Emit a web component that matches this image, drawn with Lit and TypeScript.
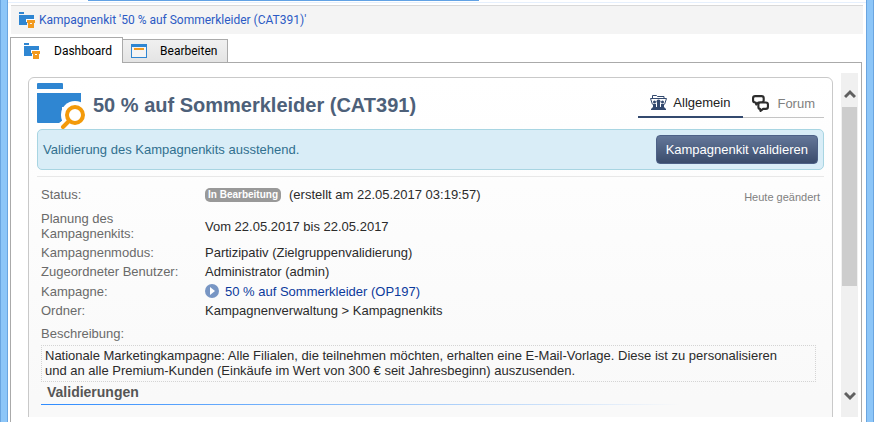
import { LitElement, html, css } from "lit";
import { customElement } from "lit/decorators.js";

const kitIcon = html`<svg class="i16" viewBox="0 0 16 16" aria-hidden="true">
  <path fill="#2f86d2" d="M0 0h5v2H0zM0 3h15v5H8v5H0z" />
  <path fill="#fff" d="M7 7h9v3H7z" />
  <path fill="#f29a1f" d="M8 8h8v3H8zM9 12h6v4H9z" />
  <path fill="#f29a1f" d="M9 11h2v1H9zM13 11h2v1h-2z" />
</svg>`;

const formIcon = html`<svg class="i16" viewBox="0 0 16 14" aria-hidden="true">
  <path fill="#2f86d2" d="M0 0h16v14H0z" />
  <path fill="#f4f4f4" d="M1 3h14v10H1z" />
  <path fill="#f29a1f" d="M3 4h10v2H3z" />
</svg>`;

const bigIcon = html`<svg class="big" viewBox="0 0 48 46" aria-hidden="true">
  <path fill="#2f86d2" d="M1 0h24q1 0 1 1v5H0V1q0-1 1-1zM0 10h44v14H25v14l-3 2H1q-1 0-1-1z" />
  <path fill="none" stroke="#fff" stroke-width="10" d="M33 37l-6 6" />
  <circle cx="38" cy="32" r="14" fill="#fff" />
  <path fill="none" stroke="#f39a0a" stroke-width="4" stroke-linecap="round" d="M32 38l-6 6" />
  <circle cx="38" cy="32" r="8" fill="#fff" stroke="#f39a0a" stroke-width="4" />
</svg>`;

const generalIcon = html`<svg class="tabicon" viewBox="0 0 17 17" aria-hidden="true">
  <path fill="none" stroke="#33496e" d="M2.500 4V1.500h4l1 1h6.500V4" />
  <path fill="none" stroke="#33496e" d="M2.500 10.500L.5 4.500h16L14.500 10.500" />
  <g fill="#33496e">
    <circle cx="4.500" cy="8" r="1.500" />
    <circle cx="12.500" cy="8" r="1.500" />
    <path d="M3 10h3v3H3zM11 10h3v3h-3z" />
    <circle cx="8.500" cy="7.500" r="2" />
    <path d="M7 9h3v5H7z" />
    <path d="M1 15l2-2h11l2 2v1H1z" />
  </g>
</svg>`;

const forumIcon = html`<svg class="tabicon" viewBox="0 0 16 16" aria-hidden="true">
  <g fill="#fff" stroke="#2d2d2d" stroke-width="2" stroke-linejoin="round">
    <path d="M3 1h6q2 0 2 2v2q0 2-2 2H6L4 9 3.500 7H3Q1 7 1 5V3q0-2 2-2z" />
    <path d="M8 7h5q2 0 2 2v2q0 2-2 2h-2.500L8 15l-.5-2Q6 13 6 11V9q0-2 2-2z" />
  </g>
</svg>`;

const playIcon = html`<svg class="play" viewBox="0 0 14 14" aria-hidden="true">
  <circle cx="7" cy="7" r="7" fill="#7896c4" />
  <path fill="#fff" d="M5 3l5 4-5 4z" />
</svg>`;

const chevron = (d: string) => html`<svg class="chev" viewBox="0 0 12 10" aria-hidden="true">
  <path fill="none" stroke="#606060" stroke-width="3" d=${d} />
</svg>`;

@customElement("app-root")
export class AppRoot extends LitElement {
  static styles = css`
    :host {
      display: block;
      font: 13px/15px "Liberation Sans", Arial, sans-serif;
      color: #2b2b2b;
      background: #fff;
    }
    * { box-sizing: border-box; }
    svg { display: block; flex: none; }
    button { font: inherit; cursor: pointer; }
    a { text-decoration: none; }

    .window {
      height: 100vh;
      margin-right: 4px;
      display: flex;
      justify-content: space-between;
    }
    .edge {
      flex: none;
      width: 8px;
      background: #8dc6f8;
      border: solid #6aa5e0;
      border-width: 0 1px;
    }
    .inner {
      flex: 1;
      min-width: 0;
      display: flex;
      flex-direction: column;
    }
    .topline { height: 3px; border-bottom: 1px solid #e6f0fd; }
    .progress {
      height: 1px;
      margin-left: 80px;
      width: calc(50% - 38px);
      background: #62a2e4;
    }
    .crumb {
      flex: none;
      margin: 2px 3px 0;
      height: 29px;
      padding: 0 8px;
      border-top: 1px solid #d9d9d9;
      background: #f4f4f4;
      display: flex;
      align-items: center;
      gap: 4px;
    }
    .crumb a, .tab { font: 12px/16px Roboto, "Open Sans", sans-serif; }
    .crumb a { color: #2c5bc4; }
    .i16 { width: 16px; height: 16px; }

    .tabs {
      flex: none;
      height: 29px;
      margin: 0 4px 0 2px;
      padding-top: 3px;
      display: flex;
      align-items: stretch;
    }
    .tab {
      display: flex;
      align-items: center;
      margin: 2px 0 0;
      padding: 0 10px 0 8px;
      gap: 13px;
      border: 1px solid #aaa;
      border-left: 0;
      background: linear-gradient(#f0f0f0, #e4e4e4);
      color: #000;
      white-space: nowrap;
    }
    .tab.on {
      margin: 0;
      padding: 0 10px 0 13px;
      gap: 14px;
      border-left: 1px solid #aaa;
      border-bottom: 0;
      background: #fff;
    }
    .rest { flex: 1; border-bottom: 1px solid #aaa; }

    .panel {
      flex: 1;
      min-height: 0;
      margin: 0 4px 0 2px;
      padding: 10px 3px 5px 17px;
      border: solid #aaa;
      border-width: 0 1px;
      display: flex;
      gap: 8px;
    }
    .view { flex: 1; min-width: 0; overflow: hidden; padding-top: 4px; }
    .card {
      min-height: 480px;
      border: 1px solid #c9c9c9;
      border-radius: 6px;
      background: linear-gradient(#fff, #f9f9f9 320px);
      padding: 5px 8px;
    }
    .head { display: flex; align-items: flex-start; height: 46px; gap: 8px; }
    .big { width: 48px; height: 46px; }
    h1 { margin: 10px 0 0; font-size: 20px; line-height: 24px; color: #4d6079; flex: 1; white-space: nowrap; }
    .subtabs { display: flex; margin-top: 6px; }
    .sub {
      display: flex;
      align-items: center;
      height: 29px;
      padding: 0 9px;
      gap: 8px;
      border: 0;
      border-bottom: 1px solid #c4c4c4;
      background: none;
      color: #808080;
    }
    .sub.on { padding: 0 13px 0 12px; gap: 6px; border-bottom: 2px solid #33496e; color: #222; }
    .tabicon { width: 17px; height: 17px; }

    .notice {
      display: flex;
      align-items: center;
      justify-content: space-between;
      height: 41px;
      padding: 0 5px;
      border: 1px solid #a8d5e2;
      border-radius: 5px;
      background: #d9edf7;
      color: #31708f;
    }
    .validate {
      height: 29px;
      padding: 0 9px;
      border: 1px solid #4d6187;
      border-radius: 4px;
      background: linear-gradient(#647799, #3a4c6c);
      color: #fff;
    }
    .status { margin-top: 6px; border-top: 1px solid #e8e8e8; padding: 10px 4px 0; position: relative; }
    .changed { position: absolute; right: 4px; top: 13px; font-size: 11px; color: #808080; }
    dl { margin: 0; display: grid; grid-template-columns: 140px 1fr; column-gap: 24px; row-gap: 4px; align-items: center; }
    dt { color: #6a6a6a; }
    dd { margin: 0; display: flex; align-items: center; gap: 8px; }
    .first { padding-bottom: 5px; }
    .badge {
      font: bold 10px/14px "Liberation Sans", Arial, sans-serif;
      padding: 0 3px;
      border-radius: 5px;
      background: #999;
      color: #fff;
    }
    .link { display: flex; align-items: center; gap: 6px; height: 16px; color: #0b3a9c; }
    .play { width: 14px; height: 14px; }
    .desc-label { margin: 8px 0 4px; color: #6a6a6a; }
    .desc { margin: 0 4px 0 0; padding: 2px 24px 3px 3px; border: 1px dotted #d4d4d4; }
    h2 { margin: 2px 0 0; padding-left: 6px; font-size: 14px; line-height: 16px; color: #555; }
    .rule { height: 1px; margin-top: 4px; background: linear-gradient(90deg, #2f8cff, #8fc0fa 320px, rgba(249, 249, 249, 0) 640px); }

    .scroll { flex: none; width: 17px; background: #f0f0f0; display: flex; flex-direction: column; align-items: center; }
    .arrow { flex: none; border: 0; padding: 8px 0 0; background: none; width: 17px; height: 34px; display: flex; justify-content: center; align-items: center; }
    .arrow.down { padding: 0 0 8px; }
    .chev { width: 12px; height: 10px; }
    .track { flex: 1; width: 15px; }
    .thumb { height: 65%; background: #cdcdcd; }
  `;

  render() {
    return html`<div class="window">
      <div class="edge"></div>
      <div class="inner">
        <div class="topline"><div class="progress"></div></div>
        <nav class="crumb">${kitIcon}<a href="#">Kampagnenkit '50 % auf Sommerkleider (CAT391)'</a></nav>
        <div class="tabs" role="tablist">
          <button class="tab on" role="tab" aria-selected="true">${kitIcon}<span>Dashboard</span></button>
          <button class="tab" role="tab" aria-selected="false">${formIcon}<span>Bearbeiten</span></button>
          <div class="rest"></div>
        </div>
        <main class="panel">
          <div class="view">
            <section class="card">
              <header class="head">
                ${bigIcon}
                <h1>50 % auf Sommerkleider (CAT391)</h1>
                <div class="subtabs" role="tablist">
                  <button class="sub on" role="tab" aria-selected="true">${generalIcon}<span>Allgemein</span></button>
                  <button class="sub" role="tab" aria-selected="false">${forumIcon}<span>Forum</span></button>
                </div>
              </header>
              <div class="notice">
                <span>Validierung des Kampagnenkits ausstehend.</span>
                <button class="validate">Kampagnenkit validieren</button>
              </div>
              <div class="status">
                <div class="changed">Heute geändert</div>
                <dl>
                  <dt class="first">Status:</dt>
                  <dd class="first"><span class="badge">In Bearbeitung</span><span>(erstellt am 22.05.2017 03:19:57)</span></dd>
                  <dt>Planung des Kampagnenkits:</dt>
                  <dd>Vom 22.05.2017 bis 22.05.2017</dd>
                  <dt>Kampagnenmodus:</dt>
                  <dd>Partizipativ (Zielgruppenvalidierung)</dd>
                  <dt>Zugeordneter Benutzer:</dt>
                  <dd>Administrator (admin)</dd>
                  <dt>Kampagne:</dt>
                  <dd><a class="link" href="#">${playIcon}50 % auf Sommerkleider (OP197)</a></dd>
                  <dt>Ordner:</dt>
                  <dd>Kampagnenverwaltung &gt; Kampagnenkits</dd>
                </dl>
                <div class="desc-label">Beschreibung:</div>
                <p class="desc">Nationale Marketingkampagne: Alle Filialen, die teilnehmen möchten, erhalten eine E-Mail-Vorlage. Diese ist zu personalisieren und an alle Premium-Kunden (Einkäufe im Wert von 300 € seit Jahresbeginn) auszusenden.</p>
                <h2>Validierungen</h2>
                <div class="rule"></div>
              </div>
            </section>
          </div>
          <div class="scroll">
            <button class="arrow" aria-label="Nach oben">${chevron("M1 8l5-5 5 5")}</button>
            <div class="track"><div class="thumb"></div></div>
            <button class="arrow down" aria-label="Nach unten">${chevron("M1 2l5 5 5-5")}</button>
          </div>
        </main>
      </div>
      <div class="edge"></div>
    </div>`;
  }
}
